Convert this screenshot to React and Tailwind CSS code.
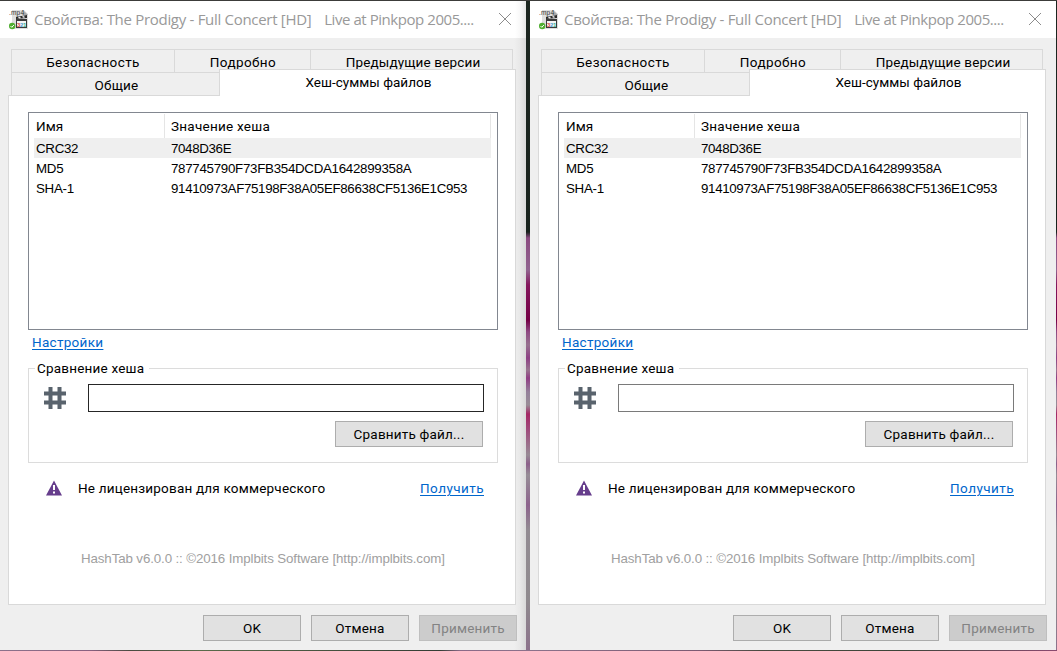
import React from "react";

const HASHES = [
  { name: "CRC32", value: "7048D36E", track: "tracking-[-0.35px]" },
  { name: "MD5", value: "787745790F73FB354DCDA1642899358A", track: "tracking-[-0.29px]" },
  { name: "SHA-1", value: "91410973AF75198F38A05EF86638CF5136E1C953", track: "tracking-[-0.34px]" },
];

const FileIcon = () => (
  <svg width="20" height="21" viewBox="0 0 20 21" className="shrink-0 -mt-px">
    <path d="M3 1h12l4 4v15H3z" fill="#dedede" />
    <path d="M14 1l5 5h-5z" fill="#a9a9a9" />
    <path d="M7 8l11-2v3L7 10z" fill="#2b2b2b" />
    <path d="M9 8.2l2-.4 1 1.4-2 .3zM13 7.4l2-.4 1 1.4-2 .3z" fill="#e8e8e8" />
    <rect x="7" y="10" width="11" height="9" fill="#3a3a3a" />
    <rect x="8" y="12" width="9" height="6" fill="#f4f4f4" />
    <text x="8" y="17.5" fontSize="6" fontWeight="700" letterSpacing="0" fontFamily="Liberation Sans, sans-serif">
      <tspan fill="#d8453c">3</tspan>
      <tspan fill="#4d9fd6" dx="-0.4">2</tspan>
      <tspan fill="#38b08b" dx="-0.4">1</tspan>
    </text>
    <text x="0" y="5.5" fontSize="6.5" fill="#333" fontFamily="Liberation Sans, sans-serif">
      .mp4
    </text>
    <circle cx="3.2" cy="17" r="3.2" fill="#4fae30" />
    <path d="M1.5 17l1.3 1.3 2.2-2.4" stroke="#fff" fill="none" />
  </svg>
);

const HashIcon = () => (
  <svg width="22" height="22" viewBox="0 0 22 22" className="shrink-0">
    <path
      d="M4.500 0h4v22h-4zM13.500 0h4v22h-4zM0 4.500h22v4H0zM0 13.500h22v4H0z"
      fill="#59636d"
    />
  </svg>
);

const WarningIcon = () => (
  <svg width="16" height="16" viewBox="0 0 16 16" className="shrink-0">
    <path d="M8 .5L16 15.5H0z" fill="#663d8c" />
    <path d="M7 5h2v5H7zM7 11.5h2v2H7z" fill="#fff" />
  </svg>
);

const Button = ({ children, className }) => (
  <button
    className={`h-[26px] border pt-px whitespace-nowrap leading-none ${className}`}
  >
    {children}
  </button>
);

const PropertiesWindow = ({ focused }) => (
  <div
    className={`w-[526px] h-[649px] shrink-0 text-[13.5px] tracking-[0.2px] text-black ${
      focused
        ? "bg-[linear-gradient(90deg,#efefef_514px,#e8e8e8_520px,#d8d8d8_526px)]"
        : "bg-[#efefef]"
    }`}
  >
    {/* Title bar */}
    <div
      className={`h-[37px] flex items-center pl-[9px] pr-[15px] ${
        focused
          ? "bg-[linear-gradient(90deg,#fff_515px,#f7f7f7_521px,#e6e6e6_526px)]"
          : "bg-white"
      }`}
    >
      <FileIcon />
      <span className="ml-[5px] flex-1 whitespace-pre font-['Open_Sans',sans-serif] text-[15px] text-[#999]">
        <span className="tracking-[-0.3px]">Свойства: The Prodigy - Full Concert [HD]   </span>
        <span className="ml-[2px] tracking-[-0.44px]">Live at Pinkpop 2005....</span>
      </span>
      <svg width="12" height="12" viewBox="0 0 12 12" className="shrink-0 -mt-px">
        <path d="M0 0l12 12M12 0L0 12" stroke="#8c8c8c" fill="none" />
      </svg>
    </div>

    {/* Tabs */}
    <div className="pl-[11px] pt-[11px] flex leading-[25px] text-center">
      <div className="w-[163px] h-[23px] border-l border-t border-[#d9d9d9] tracking-[0.4px]">Безопасность</div>
      <div className="w-[136px] h-[23px] border-l border-t border-[#d9d9d9] pl-px tracking-[0.4px]">Подробно</div>
      <div className="w-[203px] h-[23px] border-x border-t border-[#d9d9d9] pl-[3px] tracking-[0.15px]">
        Предыдущие версии
      </div>
    </div>
    <div className="relative pl-[11px] flex text-center h-[23px]">
      <div className="w-[208px] border-l border-t border-[#d9d9d9] pl-[2px] leading-[25px]">Общие</div>
      <div className="w-[297px] h-[27px] -mt-[3px] shrink-0 bg-white border-x border-t border-[#d9d9d9] pl-[2px] tracking-[0.02px] leading-[25px]">
        Хеш-суммы файлов
      </div>
    </div>

    {/* Page */}
    <div className="ml-[8px] w-[508px] h-[510px] bg-white border border-[#d9d9d9] px-[19px] pt-[16px]">
      <div className="w-[470px] h-[218px] border border-[#828790] pl-[5px] pr-[6px] pt-px">
        <div className="flex h-[24px] leading-[25px]">
          <div className="w-[131px] pl-[2px] border-r border-[#e5e5e5] tracking-[0.1px]">Имя</div>
          <div className="flex-1 pl-[6px] border-r border-[#e5e5e5] tracking-[0.25px]">Значение хеша</div>
        </div>
        {HASHES.map((hash, i) => (
          <div
            key={hash.name}
            className={`flex h-[20px] leading-[22px] font-['Liberation_Sans',sans-serif] text-[13.33px] ${
              i === 0 ? "bg-[#efefef]" : ""
            }`}
          >
            <div className="w-[137px] pl-[2px] tracking-[-0.3px]">{hash.name}</div>
            <div className={hash.track}>{hash.value}</div>
          </div>
        ))}
      </div>

      <div className="h-[38px] pl-[4px] pt-[2px] leading-[20px] text-[#0066cc] tracking-[0.3px]">
        <a className="underline underline-offset-2">Настройки</a>
      </div>

      {/* Compare group */}
      <div className="w-[470px] h-[95px] border border-[#dcdcdc]">
        <div className="-mt-[11px] ml-[6px] h-[20px] w-[114px] bg-white pl-[2px] leading-[20px]">
          Сравнение хеша
        </div>
        <div className="mt-[6px] pl-[15px] flex items-center">
          <HashIcon />
          <input
            className={`ml-[22px] w-[396px] h-[28px] bg-white border outline-none ${
              focused ? "border-[#262626]" : "border-[#7a7a7a]"
            }`}
          />
        </div>
        <div className="mt-[9px] pr-[14px] flex justify-end">
          <Button className="w-[148px] bg-[#e1e1e1] border-[#adadad]">Сравнить файл...</Button>
        </div>
      </div>

      <div className="mt-[15px] pl-[18px] pr-[12px] h-[20px] flex items-center leading-[20px]">
        <WarningIcon />
        <span className="ml-[16px] flex-1">Не лицензирован для коммерческого</span>
        <a className="text-[#0066cc] underline underline-offset-2 tracking-[0.45px]">Получить</a>
      </div>

      <div className="mt-[51px] pl-[53px] leading-[20px] font-['Liberation_Sans',sans-serif] text-[13.33px] tracking-[-0.12px] text-[#a0a0a0]">
        HashTab v6.0.0 :: ©2016 Implbits Software [http://implbits.com]
      </div>
    </div>

    {/* Buttons */}
    <div className="mt-[10px] ml-[203px] flex gap-[10px]">
      <Button className="w-[98px] bg-[#e1e1e1] border-[#adadad]">OK</Button>
      <Button className="w-[98px] bg-[#e1e1e1] border-[#adadad]">Отмена</Button>
      <Button className="w-[98px] bg-[#ccc] border-[#bfbfbf] text-[#838383]">Применить</Button>
    </div>
  </div>
);

const App = () => {
  return (
    <div className="w-[1057px] h-[651px] overflow-hidden flex flex-col bg-[#3a3a36] font-[Roboto,sans-serif]">
      <div className="flex gap-[4px] pt-px bg-[linear-gradient(180deg,#3c3c3a_0px,#3c3c3a_1px,#1c2620_1px,#18221d_232px,#8b4a80_238px,#90648f_270px,#84165c_285px,#740045_320px,#8f4a83_332px,#96708e_345px,#8d3f84_358px,#98748f_370px,#903d84_378px,#94809a_392px,#988c96_405px,#a52765_414px,#9f4b7c_430px,#978a95_455px,#8c5f8a_464px,#968d96_475px,#8c628c_505px,#928b92_530px,#8f8a8e_600px,#8c728b_650px)]">
        <PropertiesWindow focused />
        <PropertiesWindow />
      </div>
      <div className="h-px bg-[linear-gradient(90deg,#8c728b_0px,#8a6080_90px,#4a4a40_130px,#5a6a4a_200px,#343c34_440px,#8b6a88_460px,#8c728b_530px,#7c5a72_700px,#4a4a40_760px,#3c4438_900px,#8b4a70_1057px)]" />
    </div>
  );
};

export default App;
